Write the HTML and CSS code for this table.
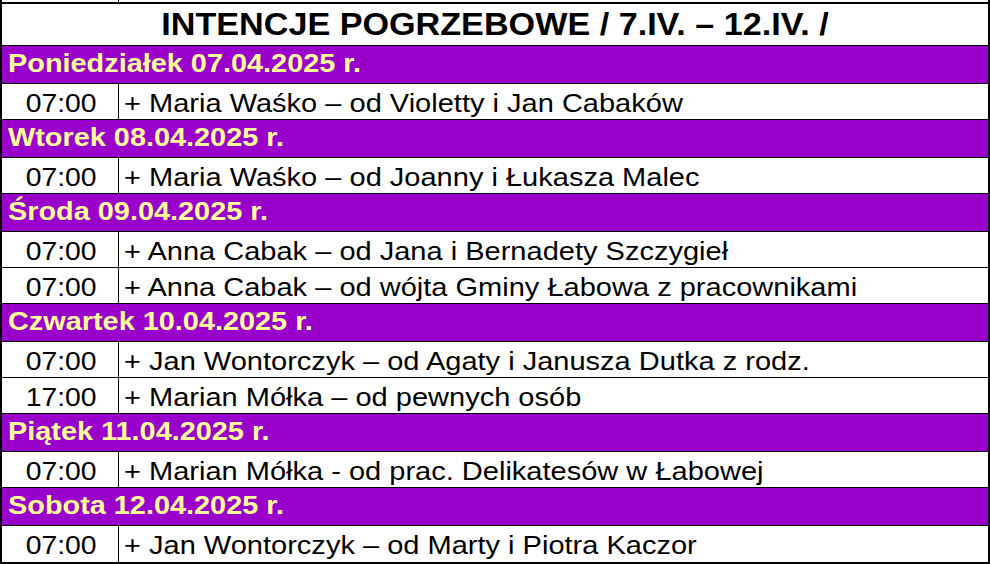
FILE: index.html
```html
<!DOCTYPE html>
<html lang="pl">
<head>
<meta charset="utf-8">
<title>Intencje pogrzebowe</title>
<link rel="stylesheet" href="styles.css">
</head>
<body>
<div class="sheet">
  <div class="strip"><div class="strip-cell"></div><div></div></div>
  <div class="table">
    <div class="title"><span class="t">INTENCJE POGRZEBOWE / 7.IV. – 12.IV. /</span></div>

    <div class="row day"><span class="d">Poniedziałek 07.04.2025 r.</span></div>
    <div class="row entry"><div class="time"><span class="c">07:00</span></div><div class="text"><span class="e">+ Maria Waśko – od Violetty i Jan Cabaków</span></div></div>

    <div class="row day"><span class="d">Wtorek 08.04.2025 r.</span></div>
    <div class="row entry"><div class="time"><span class="c">07:00</span></div><div class="text"><span class="e">+ Maria Waśko – od Joanny i Łukasza Malec</span></div></div>

    <div class="row day"><span class="d">Środa 09.04.2025 r.</span></div>
    <div class="row entry"><div class="time"><span class="c">07:00</span></div><div class="text"><span class="e">+ Anna Cabak – od Jana i Bernadety Szczygieł</span></div></div>
    <div class="row entry"><div class="time"><span class="c">07:00</span></div><div class="text"><span class="e">+ Anna Cabak – od wójta Gminy Łabowa z pracownikami</span></div></div>

    <div class="row day"><span class="d">Czwartek 10.04.2025 r.</span></div>
    <div class="row entry"><div class="time"><span class="c">07:00</span></div><div class="text"><span class="e">+ Jan Wontorczyk – od Agaty i Janusza Dutka z rodz.</span></div></div>
    <div class="row entry"><div class="time"><span class="c">17:00</span></div><div class="text"><span class="e">+ Marian Mółka – od pewnych osób</span></div></div>

    <div class="row day"><span class="d">Piątek 11.04.2025 r.</span></div>
    <div class="row entry"><div class="time"><span class="c">07:00</span></div><div class="text"><span class="e">+ Marian Mółka - od prac. Delikatesów w Łabowej</span></div></div>

    <div class="row day"><span class="d">Sobota 12.04.2025 r.</span></div>
    <div class="row entry last"><div class="time"><span class="c">07:00</span></div><div class="text"><span class="e">+ Jan Wontorczyk – od Marty i Piotra Kaczor</span></div></div>
  </div>
</div>
</body>
</html>
```

FILE: styles.css
```css
* { box-sizing: border-box; }

html, body {
  margin: 0;
  padding: 0;
  background: #ffffff;
}

body {
  font-family: "Liberation Sans", Arial, sans-serif;
  color: #000000;
}

.sheet {
  width: 990px;
  height: 564px;
  overflow: hidden;
}

.strip {
  height: 2px;
  display: grid;
  grid-template-columns: 117px 1fr;
  border-left: 2px solid #000;
  border-right: 2px solid #000;
}

.strip-cell {
  border-right: 1px solid #000;
}

.table {
  border: 2px solid #000;
  height: 562px;
}

.title {
  height: 41px;
  text-align: center;
  font-weight: bold;
  font-size: 30.5px;
  line-height: 1.15;
  padding-top: 3px;
  white-space: nowrap;
}

.t {
  display: inline-block;
  transform: scaleX(1.12);
  transform-origin: center center;
}

.row {
  border-top: 1px solid #000;
  white-space: nowrap;
}

.day {
  height: 38px;
  background: #9900cc;
  color: #ffff99;
  font-weight: bold;
  font-size: 26px;
  line-height: 1.15;
  padding: 3px 0 0 6px;
}

.d {
  display: inline-block;
  transform: scaleX(1.11);
  transform-origin: left center;
}

.entry {
  height: 36px;
  display: grid;
  grid-template-columns: 117px 1fr;
  font-size: 26.5px;
  line-height: 1.15;
}

.entry.last {
  height: 37px;
}

.time {
  border-right: 1px solid #000;
  text-align: center;
  padding: 4px 0 0 3px;
}

.text {
  padding: 4px 0 0 5px;
}

.c {
  display: inline-block;
  transform: scaleX(1.07);
  transform-origin: center center;
}

.e {
  display: inline-block;
  transform: scaleX(1.095);
  transform-origin: left center;
}
```
